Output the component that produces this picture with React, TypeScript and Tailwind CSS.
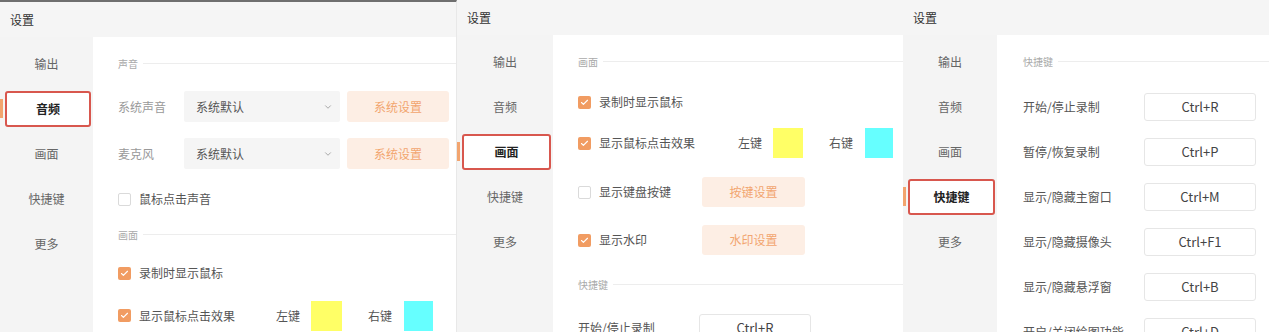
import { ChevronDown, Check } from 'lucide-react';

const font = { fontFamily: '"Noto Sans CJK SC", "Noto Sans", sans-serif' };

const navItems = ['输出', '音频', '画面', '快捷键', '更多'];

const hotkeys = [
  { label: '开始/停止录制', key: 'Ctrl+R' },
  { label: '暂停/恢复录制', key: 'Ctrl+P' },
  { label: '显示/隐藏主窗口', key: 'Ctrl+M' },
  { label: '显示/隐藏摄像头', key: 'Ctrl+F1' },
  { label: '显示/隐藏悬浮窗', key: 'Ctrl+B' },
  { label: '开启/关闭绘图功能', key: 'Ctrl+D' },
];

const Sidebar = ({ active, width }: { active: string; width: string }) => (
  <div className={`${width} shrink-0 bg-[#f4f4f4] pt-[4px]`}>
    {navItems.map((item) => (
      <div key={item} className="relative flex h-[45px] items-center justify-center">
        {item === active ? (
          <>
            <div className="absolute left-0 top-[13px] h-[19px] w-[3px] bg-[#f2a46e]" />
            <div className="ml-[5px] mr-[2px] flex h-[36px] flex-1 items-center justify-center rounded-[3px] border-2 border-[#d8574e] bg-white text-[12px] font-bold text-[#222]">
              {item}
            </div>
          </>
        ) : (
          <span className="text-[12px] text-[#666]">{item}</span>
        )}
      </div>
    ))}
  </div>
);

const SectionTitle = ({ text, className = '' }: { text: string; className?: string }) => (
  <div className={`flex h-[20px] items-center gap-[5px] ${className}`}>
    <span className="text-[10px] text-[#aaa]">{text}</span>
    <div className="h-px flex-1 bg-[#ededed]" />
  </div>
);

const Checkbox = ({ checked }: { checked?: boolean }) =>
  checked ? (
    <div className="flex h-[13px] w-[13px] shrink-0 items-center justify-center rounded-[2px] bg-[#f19c62]">
      <Check size={9} strokeWidth={3} className="text-white" />
    </div>
  ) : (
    <div className="h-[13px] w-[13px] shrink-0 rounded-[2px] border border-[#dadada] bg-white" />
  );

const CheckRow = ({
  checked,
  label,
  labelWidth,
  className = '',
  children,
}: {
  checked?: boolean;
  label: string;
  labelWidth?: string;
  className?: string;
  children?: React.ReactNode;
}) => (
  <div className={`flex items-center ${className}`}>
    <Checkbox checked={checked} />
    <span className={`ml-[8px] text-[12px] text-[#555] ${labelWidth ?? ''}`}>{label}</span>
    {children}
  </div>
);

const PeachButton = ({ text, className = '' }: { text: string; className?: string }) => (
  <div className={`flex h-[30px] items-center justify-center rounded-[3px] bg-[#fdeee4] text-[12px] text-[#f2a56f] ${className}`}>
    {text}
  </div>
);

const ClickColors = ({ leftW, rightW }: { leftW: string; rightW: string }) => (
  <>
    <span className="text-[12px] text-[#555]">左键</span>
    <div className={`ml-[11px] h-[30px] ${leftW} bg-[#ffff66]`} />
    <span className="ml-[26px] text-[12px] text-[#555]">右键</span>
    <div className={`ml-[12px] h-[30px] ${rightW} bg-[#66ffff]`} />
  </>
);

const SelectRow = ({ label, className = '' }: { label: string; className?: string }) => (
  <div className={`flex h-[31px] items-center ${className}`}>
    <span className="w-[66px] text-[12px] text-[#999]">{label}</span>
    <div className="flex h-full w-[156px] items-center justify-between rounded-[2px] bg-[#f5f5f5] pl-[12px] pr-[7px]">
      <span className="text-[12px] text-[#555]">系统默认</span>
      <ChevronDown size={10} className="text-[#999]" />
    </div>
    <PeachButton text="系统设置" className="ml-[7px] h-[31px] w-[102px]" />
  </div>
);

const KeyRow = ({ label, keyName }: { label: string; keyName: string }) => (
  <div className="flex h-[45px] items-center">
    <span className="w-[121px] text-[12px] text-[#555]">{label}</span>
    <div className="flex h-[28px] w-[112px] items-center justify-center rounded-[3px] border border-[#e6e6e6] bg-white text-[13px] text-[#444]">
      {keyName}
    </div>
  </div>
);

const TitleBar = () => (
  <div className="flex h-[35px] shrink-0 items-center bg-[#f5f5f5] pl-[10px] text-[12px] text-[#333]">设置</div>
);

const AudioPanel = () => (
  <div className="flex h-[332px] w-[457px] shrink-0 flex-col overflow-hidden border-r border-t-2 border-r-[#e8e8e8] border-t-[#6f6f6f]">
    <TitleBar />
    <div className="flex flex-1">
      <Sidebar active="音频" width="w-[93px]" />
      <div className="flex flex-1 flex-col bg-white pl-[25px] pt-[16px]">
        <SectionTitle text="声音" />
        <SelectRow label="系统声音" className="mt-[18px]" />
        <SelectRow label="麦克风" className="mt-[16px]" />
        <CheckRow label="鼠标点击声音" className="mt-[15px] h-[30px]" />
        <SectionTitle text="画面" className="mt-[10px]" />
        <CheckRow checked label="录制时显示鼠标" className="mt-[14px] h-[30px]" />
        <CheckRow checked label="显示鼠标点击效果" labelWidth="w-[137px]" className="mt-[12px] h-[31px]">
          <ClickColors leftW="w-[31px]" rightW="w-[29px]" />
        </CheckRow>
      </div>
    </div>
  </div>
);

const ScreenPanel = () => (
  <div className="flex h-[332px] w-[446px] shrink-0 flex-col overflow-hidden">
    <TitleBar />
    <div className="flex flex-1">
      <Sidebar active="画面" width="w-[96px]" />
      <div className="flex flex-1 flex-col bg-white pl-[25px] pt-[16px]">
        <SectionTitle text="画面" />
        <CheckRow checked label="录制时显示鼠标" className="mt-[16px] h-[30px]" />
        <CheckRow checked label="显示鼠标点击效果" labelWidth="w-[139px]" className="mt-[11px] h-[30px]">
          <ClickColors leftW="w-[30px]" rightW="w-[28px]" />
        </CheckRow>
        <CheckRow label="显示键盘按键" labelWidth="w-[103px]" className="mt-[19px] h-[30px]">
          <PeachButton text="按键设置" className="w-[103px]" />
        </CheckRow>
        <CheckRow checked label="显示水印" labelWidth="w-[103px]" className="mt-[18px] h-[30px]">
          <PeachButton text="水印设置" className="w-[103px]" />
        </CheckRow>
        <SectionTitle text="快捷键" className="mt-[19px]" />
        <div className="mt-[11px]">
          <KeyRow label={hotkeys[0].label} keyName={hotkeys[0].key} />
        </div>
      </div>
    </div>
  </div>
);

const HotkeyPanel = () => (
  <div className="flex h-[332px] flex-1 flex-col overflow-hidden">
    <TitleBar />
    <div className="flex flex-1">
      <Sidebar active="快捷键" width="w-[94px]" />
      <div className="flex flex-1 flex-col bg-white pl-[26px] pt-[16px]">
        <SectionTitle text="快捷键" />
        <div className="mt-[13px] flex flex-col">
          {hotkeys.map((h) => (
            <KeyRow key={h.key} label={h.label} keyName={h.key} />
          ))}
        </div>
      </div>
    </div>
  </div>
);

export default function App() {
  return (
    <div className="flex h-[332px] w-[1269px] overflow-hidden bg-white" style={font}>
      <AudioPanel />
      <ScreenPanel />
      <HotkeyPanel />
    </div>
  );
}
